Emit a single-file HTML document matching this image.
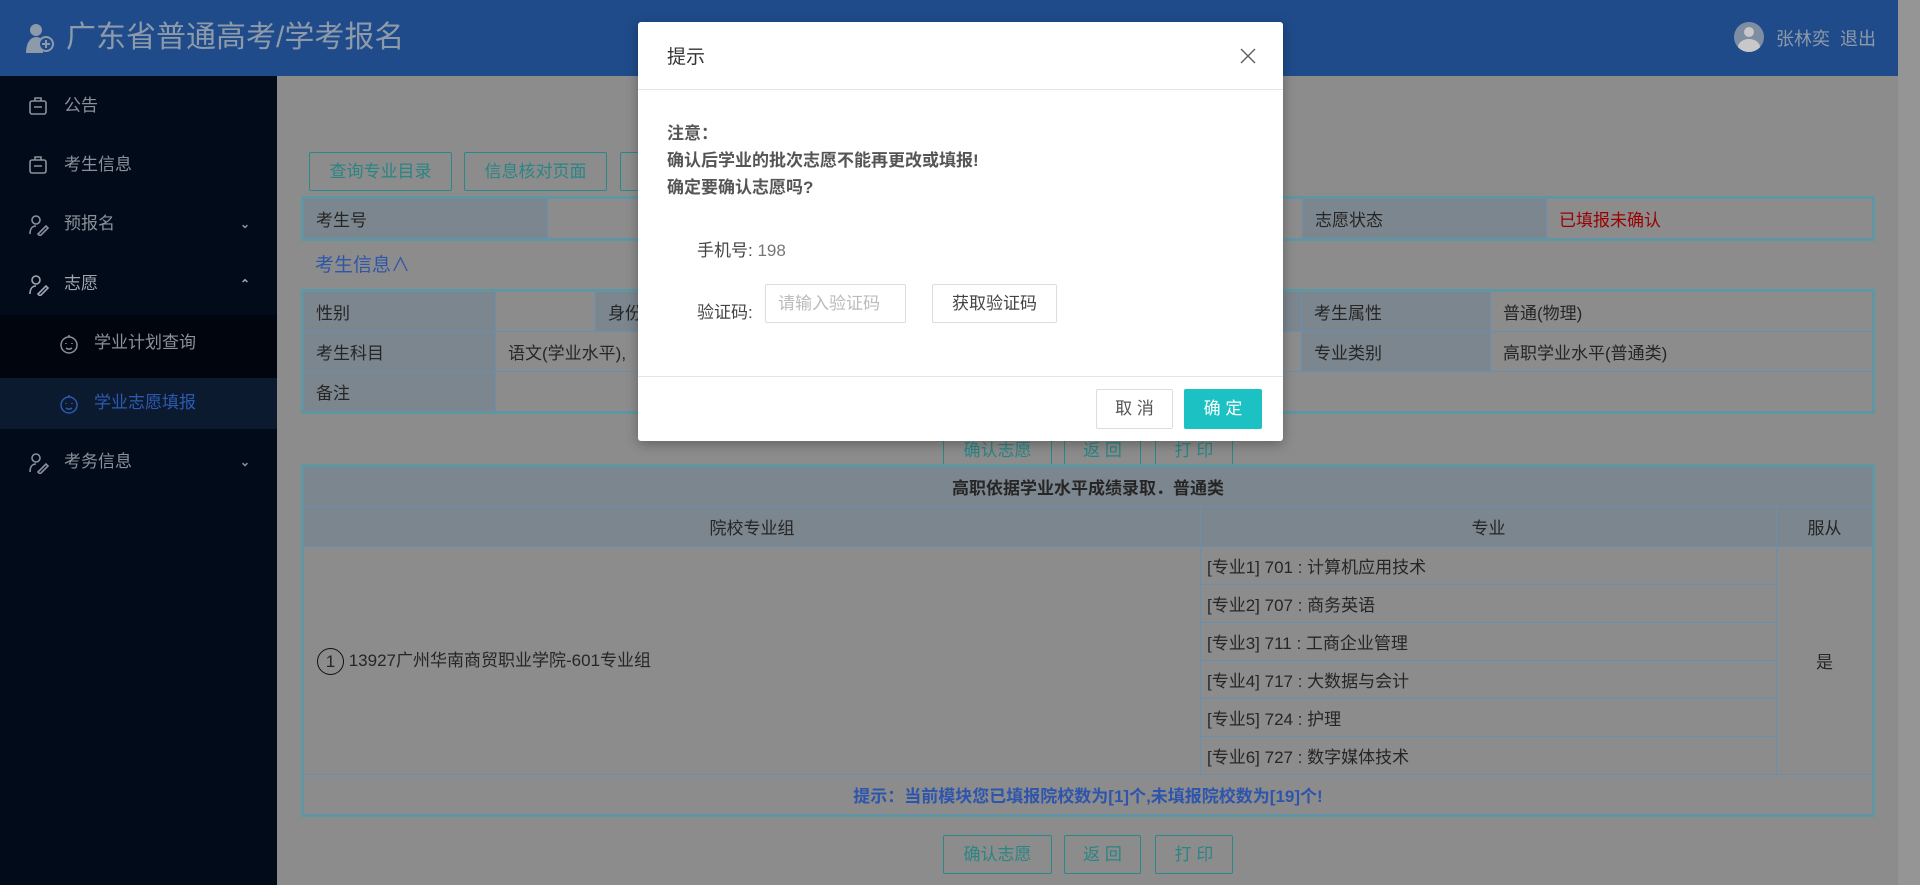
<!DOCTYPE html>
<html><head><meta charset="utf-8"><style>
*{margin:0;padding:0;box-sizing:border-box}
body{width:1920px;height:885px;overflow:hidden;background:#8c8c8c;font-family:"Liberation Sans","Noto Sans CJK SC",sans-serif;font-size:17px;color:#262626;position:relative}
.a{position:absolute}
#hd{left:0;top:0;width:1898px;height:76px;background:#1f4b8a}
#sb{left:0;top:76px;width:277px;height:809px;background:#020b19}
#scr{left:1898px;top:0;width:22px;height:885px;background:#959595}
.mi{position:absolute;left:0;width:277px;height:40px;line-height:40px;color:#8a919b;font-size:17px}
.mi svg{position:absolute;left:28px;top:10px}
.mi span{position:absolute;left:64px}
.mi .ar{position:absolute;left:240px;font-size:12px}
.btn{position:absolute;border:1px solid #2a8888;border-radius:2px;color:#2a8585;text-align:center;font-size:17px}
table{border-collapse:collapse;position:absolute}
td{border:1px solid #6a8fae;height:40px;padding:0 12px;font-size:17px;color:#262626}
.lb{background:#7c868e}
.tbl{outline:2px solid #5a999e}
</style></head><body>
<div class="a" id="hd">
 <svg class="a" style="left:24px;top:21px" width="32" height="32" viewBox="0 0 32 32"><circle cx="12" cy="9" r="6" fill="#8d9aaa"/><path d="M2 32 C2 20 8 16 12 16 C16 16 18 18 19 20 L19 32Z" fill="#8d9aaa"/><circle cx="22" cy="23" r="7" fill="#1f4b8a" stroke="#8d9aaa" stroke-width="2"/><path d="M22 19v8M18 23h8" stroke="#8d9aaa" stroke-width="2"/></svg>
 <div class="a" style="left:66px;top:17px;font-size:30px;color:#8d9aaa;line-height:42px">广东省普通高考/学考报名</div>
 <div class="a" style="left:1734px;top:22px;width:30px;height:30px;border-radius:50%;background:#7d8ea2;overflow:hidden"><div class="a" style="left:10px;top:5px;width:10px;height:10px;border-radius:50%;background:#c8c8c8"></div><div class="a" style="left:4px;top:17px;width:22px;height:16px;border-radius:50%;background:#c8c8c8"></div></div>
 <div class="a" style="left:1776px;top:25px;font-size:18px;color:#8d9aaa">张林奕&nbsp;&nbsp;退出</div>
</div>
<div class="a" id="sb">
 <div class="a" style="left:0;top:239px;width:277px;height:63px;background:#01060e"></div>
 <div class="a" style="left:0;top:302px;width:277px;height:51px;background:#0c1a30"></div>
</div>
<div class="mi" style="top:86px"><svg width="20" height="20" viewBox="0 0 20 20" fill="none" stroke="#8a919b" stroke-width="1.6"><rect x="2" y="5" width="16" height="13" rx="2"/><path d="M7 5V2h6v3M6 11h8"/></svg><span>公告</span></div>
<div class="mi" style="top:145px"><svg width="20" height="20" viewBox="0 0 20 20" fill="none" stroke="#8a919b" stroke-width="1.6"><rect x="2" y="5" width="16" height="13" rx="2"/><path d="M7 5V2h6v3M6 11h8"/></svg><span>考生信息</span></div>
<div class="mi" style="top:204px"><svg width="22" height="22" viewBox="0 0 22 22" fill="none" stroke="#8a919b" stroke-width="1.6"><circle cx="8" cy="6" r="4"/><path d="M2 20c0-6 3-8 6-8M10 20l8-8 2 2-8 8z"/></svg><span>预报名</span><b class="ar">⌄</b></div>
<div class="mi" style="top:264px;color:#a0a7b0"><svg width="22" height="22" viewBox="0 0 22 22" fill="none" stroke="#a0a7b0" stroke-width="1.6"><circle cx="8" cy="6" r="4"/><path d="M2 20c0-6 3-8 6-8M10 20l8-8 2 2-8 8z"/></svg><span>志愿</span><b class="ar">⌃</b></div>
<div class="mi" style="top:323px"><svg style="left:58px" width="22" height="22" viewBox="0 0 22 22" fill="none" stroke="#8a919b" stroke-width="1.5"><circle cx="11" cy="12" r="8"/><path d="M8 10v1M14 10v1M8 15c2 1.5 4 1.5 6 0M11 4V2"/></svg><span style="left:94px">学业计划查询</span></div>
<div class="mi" style="top:383px;color:#2c5ab0"><svg style="left:58px" width="22" height="22" viewBox="0 0 22 22" fill="none" stroke="#2c5ab0" stroke-width="1.5"><circle cx="11" cy="12" r="8"/><path d="M8 10v1M14 10v1M8 15c2 1.5 4 1.5 6 0M11 4V2"/></svg><span style="left:94px">学业志愿填报</span></div>
<div class="mi" style="top:442px"><svg width="22" height="22" viewBox="0 0 22 22" fill="none" stroke="#8a919b" stroke-width="1.6"><circle cx="8" cy="6" r="4"/><path d="M2 20c0-6 3-8 6-8M10 20l8-8 2 2-8 8z"/></svg><span>考务信息</span><b class="ar">⌄</b></div>
<div class="a" id="scr"></div>

<div class="btn" style="left:309px;top:152px;width:143px;height:39px;line-height:37px">查询专业目录</div>
<div class="btn" style="left:464px;top:152px;width:143px;height:39px;line-height:37px">信息核对页面</div>
<div class="btn" style="left:620px;top:152px;width:143px;height:39px"></div>

<table class="tbl" style="left:303px;top:198px;width:1570px"><tr><td class="lb" style="width:244px">考生号</td><td></td><td class="lb" style="width:244px">志愿状态</td><td style="width:326px;color:#9a0000">已填报未确认</td></tr></table>
<div class="a" style="left:315px;top:250px;color:#2f56a8;font-size:19px">考生信息∧</div>
<table class="tbl" style="left:303px;top:291px;width:1570px">
<tr><td class="lb" style="width:192px">性别</td><td style="width:100px"></td><td class="lb">身份</td><td class="lb" style="width:189px">考生属性</td><td style="width:382px">普通(物理)</td></tr>
<tr><td class="lb">考生科目</td><td colspan="2">语文(学业水平),</td><td class="lb">专业类别</td><td>高职学业水平(普通类)</td></tr>
<tr><td class="lb">备注</td><td colspan="4"></td></tr></table>
<div class="btn" style="left:943px;top:431px;width:109px;height:39px;line-height:37px">确认志愿</div>
<div class="btn" style="left:1064px;top:431px;width:77px;height:39px;line-height:37px">返 回</div>
<div class="btn" style="left:1155px;top:431px;width:78px;height:39px;line-height:37px">打 印</div>

<table class="tbl" style="left:303px;top:466px;width:1570px">
<tr><td class="lb" colspan="3" style="text-align:center;font-weight:bold;height:40px">高职依据学业水平成绩录取．普通类</td></tr>
<tr><td class="lb" style="text-align:center;width:897px;height:39px">院校专业组</td><td class="lb" style="text-align:center;width:576px">专业</td><td class="lb" style="text-align:center">服从</td></tr>
<tr><td rowspan="6" style="padding-left:13px"><span style="display:inline-block;width:27px;height:27px;border:1px solid #111;border-radius:50%;text-align:center;line-height:25px;vertical-align:middle">1</span> 13927广州华南商贸职业学院-601专业组</td><td style="padding-left:6px;height:38px">[专业1] 701 : 计算机应用技术</td><td rowspan="6" style="text-align:center">是</td></tr>
<tr><td style="padding-left:6px;height:38px">[专业2] 707 : 商务英语</td></tr>
<tr><td style="padding-left:6px;height:38px">[专业3] 711 : 工商企业管理</td></tr>
<tr><td style="padding-left:6px;height:38px">[专业4] 717 : 大数据与会计</td></tr>
<tr><td style="padding-left:6px;height:38px">[专业5] 724 : 护理</td></tr>
<tr><td style="padding-left:6px;height:38px">[专业6] 727 : 数字媒体技术</td></tr>
<tr><td colspan="3" style="text-align:center;color:#2d55ad;font-weight:bold;height:40px">提示：当前模块您已填报院校数为[1]个,未填报院校数为[19]个!</td></tr>
</table>
<div class="btn" style="left:943px;top:835px;width:109px;height:39px;line-height:37px">确认志愿</div>
<div class="btn" style="left:1064px;top:835px;width:77px;height:39px;line-height:37px">返 回</div>
<div class="btn" style="left:1155px;top:835px;width:78px;height:39px;line-height:37px">打 印</div>

<div class="a" style="left:638px;top:22px;width:645px;height:419px;background:#fff;border-radius:3px;box-shadow:0 3px 12px rgba(0,0,0,.3)">
 <div class="a" style="left:29px;top:20px;font-size:19px;color:#333">提示</div>
 <svg class="a" style="left:602px;top:26px" width="16" height="16" viewBox="0 0 16 16" stroke="#666" stroke-width="1.5"><path d="M1 1l14 14M15 1L1 15"/></svg>
 <div class="a" style="left:0;top:67px;width:645px;height:1px;background:#e5e5e5"></div>
 <div class="a" style="left:29px;top:98px;font-size:17px;font-weight:bold;color:#555;line-height:27px">注意：<br>确认后学业的批次志愿不能再更改或填报!<br>确定要确认志愿吗?</div>
 <div class="a" style="left:59px;top:214px;font-size:17px;color:#444">手机号: <span style="color:#777">198</span></div>
 <div class="a" style="left:59px;top:276px;font-size:17px;color:#444">验证码:</div>
 <div class="a" style="left:127px;top:262px;width:141px;height:39px;border:1px solid #ddd;border-radius:2px;color:#bbb;font-size:17px;line-height:37px;padding-left:12px">请输入验证码</div>
 <div class="a" style="left:294px;top:262px;width:125px;height:39px;border:1px solid #ddd;border-radius:2px;color:#444;font-size:17px;line-height:37px;text-align:center">获取验证码</div>
 <div class="a" style="left:0;top:354px;width:645px;height:1px;background:#e5e5e5"></div>
 <div class="a" style="left:458px;top:367px;width:77px;height:40px;border:1px solid #ddd;border-radius:2px;color:#555;font-size:17px;line-height:38px;text-align:center">取 消</div>
 <div class="a" style="left:546px;top:367px;width:78px;height:40px;background:#1cc2c3;border-radius:2px;color:#fff;font-size:17px;line-height:40px;text-align:center">确 定</div>
</div>
</body></html>
